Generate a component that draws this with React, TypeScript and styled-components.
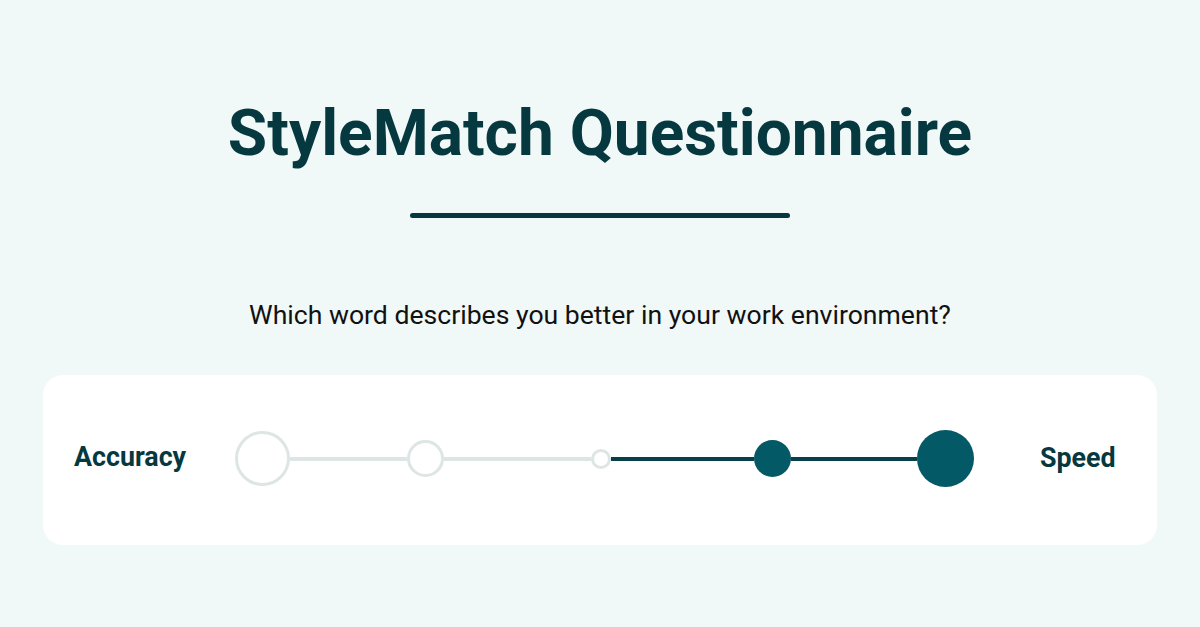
import React from "react";
import styled, { createGlobalStyle } from "styled-components";

const GlobalStyle = createGlobalStyle`
    html, body {
        margin: 0;
        padding: 0;
        background: #f0f8f8;
        font-family: Roboto, "Liberation Sans", sans-serif;
    }
`;

const Page = styled.div`
    width: 1200px;
    height: 627px;
    display: flex;
    flex-direction: column;
    align-items: center;
    box-sizing: border-box;
    padding-top: 95px;
`;

const Title = styled.h1`
    margin: 0;
    font-size: 64px;
    line-height: 78px;
    font-weight: 700;
    color: #05383f;
`;

const Divider = styled.div`
    width: 380px;
    height: 5px;
    border-radius: 3px;
    background: #05383f;
    margin-top: 40px;
`;

const Question = styled.p`
    margin: 81px 0 0;
    font-size: 26.6px;
    line-height: 32px;
    color: #111;
`;

const Card = styled.div`
    margin-top: 44px;
    width: 1114px;
    height: 170px;
    box-sizing: border-box;
    background: #fff;
    border-radius: 20px;
    display: flex;
    align-items: center;
    padding: 0 43px 4px 31px;
`;

const Label = styled.span<{ $width: number; $lift?: number }>`
    width: ${(p) => p.$width}px;
    flex-shrink: 0;
    margin-bottom: ${(p) => p.$lift ?? 0}px;
    font-size: 26.8px;
    font-weight: 700;
    color: #05383f;
    white-space: nowrap;
`;

const Slider = styled.div`
    display: flex;
    align-items: center;
    margin: 1px 66px 0 50px;
`;

const Dot = styled.div<{ $size: number; $filled?: boolean }>`
    width: ${(p) => p.$size}px;
    height: ${(p) => p.$size}px;
    box-sizing: border-box;
    border-radius: 50%;
    flex-shrink: 0;
    background: ${(p) => (p.$filled ? "#035966" : "#fff")};
    border: ${(p) => (p.$filled ? "none" : "3px solid #dde5e5")};
`;

const Line = styled.div<{ $width: number; $active?: boolean }>`
    width: ${(p) => p.$width}px;
    height: 4px;
    background: ${(p) => (p.$active ? "#08404a" : "#dde5e5")};
`;

const App = () => {
    return (
        <>
            <GlobalStyle />
            <Page>
                <Title>StyleMatch Questionnaire</Title>
                <Divider />
                <Question>Which word describes you better in your work environment?</Question>
                <Card>
                    <Label $width={111} $lift={3}>Accuracy</Label>
                    <Slider>
                        <Dot $size={55} />
                        <Line $width={117} />
                        <Dot $size={37} />
                        <Line $width={147} />
                        <Dot $size={20} />
                        <Line $width={143} $active />
                        <Dot $size={37} $filled />
                        <Line $width={126} $active />
                        <Dot $size={57} $filled />
                    </Slider>
                    <Label $width={74}>Speed</Label>
                </Card>
            </Page>
        </>
    );
};

export default App;
